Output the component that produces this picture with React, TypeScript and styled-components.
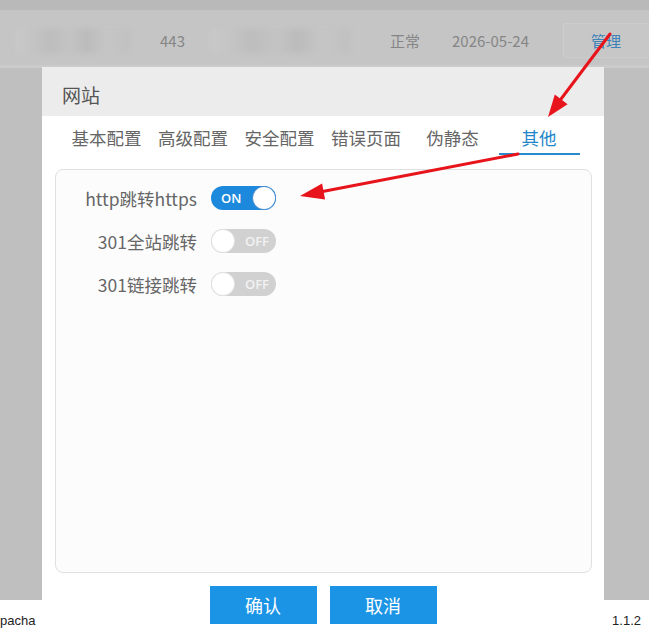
import React from "react";
import styled, { createGlobalStyle } from "styled-components";

const Global = createGlobalStyle`
  html, body { margin: 0; padding: 0; background: #fff; }
  body { font-family: "Noto Sans CJK SC", "Noto Sans", sans-serif; }
  * { box-sizing: border-box; }
`;

const Page = styled.div`
  position: relative;
  width: 649px;
  height: 629px;
  overflow: hidden;
  background: #fff;
`;

const Backdrop = styled.div`
  display: flex;
  flex-direction: column;
  height: 100%;
`;

const TopStrip = styled.div`
  height: 10px;
  background: #b9b9b9;
`;

const TableRow = styled.div`
  height: 58px;
  background: #c5c5c5;
  border-bottom: 3px solid #cbcbcb;
  display: flex;
  align-items: center;
  padding-top: 6px;
  padding-left: 15px;
  color: #858585;
  font-size: 15px;
`;

const Cell = styled.div<{ $w: number }>`
  width: ${(p) => p.$w}px;
  flex: none;
  white-space: nowrap;
`;

const Blob = styled.div<{ $w: number }>`
  width: ${(p) => p.$w}px;
  height: 24px;
  flex: none;
  filter: blur(2.5px);
  background: linear-gradient(
    90deg,
    #c9c9c9 0%,
    #c3c3c3 18%,
    #bdbdbd 30%,
    #c4c4c4 48%,
    #bbbbbb 62%,
    #c6c6c6 80%,
    #c0c0c0 100%
  );
`;

const ManageBtn = styled.div`
  width: 90px;
  height: 35px;
  flex: none;
  border: 1px solid #cdcdcd;
  border-radius: 2px;
  background: #c7c7c7;
  color: #3d82b8;
  font-size: 15px;
  display: flex;
  align-items: center;
  padding-left: 27px;
`;

const Dim = styled.div`
  flex: 1;
  background: #bfbfbf;
`;

const Footer = styled.div`
  height: 29px;
  flex: none;
  background: #fff;
  display: flex;
  justify-content: space-between;
  padding-top: 13px;
  padding-right: 8px;
  font-family: "Liberation Sans", sans-serif;
  font-size: 13px;
  line-height: 15px;
  color: #222;
`;

const Modal = styled.div`
  position: absolute;
  left: 42px;
  top: 67px;
  width: 562px;
  height: 580px;
  background: #fff;
  display: flex;
  flex-direction: column;
`;

const Header = styled.div`
  height: 49px;
  flex: none;
  background: #ececec;
  color: #555;
  font-size: 19px;
  display: flex;
  align-items: center;
  padding-left: 20px;
  padding-top: 5px;
`;

const Tabs = styled.div`
  height: 39px;
  flex: none;
  display: flex;
  gap: 5.5px;
  padding-left: 24px;
`;

const Tab = styled.div<{ $active?: boolean }>`
  width: 81px;
  height: 39px;
  padding-top: 6px;
  display: flex;
  align-items: center;
  justify-content: center;
  font-size: 17.5px;
  color: ${(p) => (p.$active ? "#1f86c9" : "#666")};
  border-bottom: 2px solid ${(p) => (p.$active ? "#2a8acb" : "transparent")};
  white-space: nowrap;
`;

const Body = styled.div`
  padding: 14px 12px 0 13px;
`;

const Panel = styled.div`
  height: 404px;
  border: 1px solid #e0e0e0;
  border-radius: 8px;
  background: #fcfcfc;
  padding-top: 6.5px;
`;

const Row = styled.div`
  height: 43px;
  display: grid;
  grid-template-columns: 141px auto;
  column-gap: 14px;
  align-items: center;
  justify-items: start;
`;

const Label = styled.div`
  justify-self: end;
  font-size: 17.5px;
  color: #666;
  white-space: nowrap;
`;

const Switch = styled.div<{ $on?: boolean }>`
  width: 65px;
  height: 24px;
  border-radius: 12px;
  background: ${(p) => (p.$on ? "#1d89dd" : "#d1d1d1")};
  display: flex;
  align-items: center;
  flex-direction: ${(p) => (p.$on ? "row" : "row-reverse")};
  justify-content: space-between;
  padding: 0 ${(p) => (p.$on ? "1px 0 10px" : "7px 0 1px")};
  font-family: "Open Sans", sans-serif;
  font-weight: 600;
  font-size: 13px;
  color: ${(p) => (p.$on ? "#fff" : "#f2f2f2")};
`;

const Knob = styled.span<{ $on?: boolean }>`
  width: 22px;
  height: 22px;
  border-radius: 50%;
  background: #fff;
  box-shadow: 0 0 0 1px ${(p) => (p.$on ? "#4a8fd0" : "#e2e2e2")};
`;

const Actions = styled.div`
  display: flex;
  justify-content: center;
  gap: 13px;
  margin-top: 13px;
`;

const Button = styled.div`
  width: 107px;
  height: 38px;
  background: #1b94e6;
  color: #fff;
  font-size: 18px;
  display: flex;
  align-items: center;
  justify-content: center;
`;

const ArrowLayer = styled.svg`
  position: absolute;
  left: 0;
  top: 0;
  pointer-events: none;
`;

const tabs = ["基本配置", "高级配置", "安全配置", "错误页面", "伪静态", "其他"];

const settings = [
  { label: "http跳转https", on: true },
  { label: "301全站跳转", on: false },
  { label: "301链接跳转", on: false },
];

export default function App() {
  return (
    <>
      <Global />
      <Page>
        <Backdrop>
          <TopStrip />
          <TableRow>
            <Blob $w={115} />
            <Cell $w={30} />
            <Cell $w={50}>443</Cell>
            <Blob $w={140} />
            <Cell $w={40} />
            <Cell $w={62}>正常</Cell>
            <Cell $w={111}>2026-05-24</Cell>
            <ManageBtn>管理</ManageBtn>
          </TableRow>
          <Dim />
          <Footer>
            <span>pacha</span>
            <span>1.1.2</span>
          </Footer>
        </Backdrop>

        <Modal>
          <Header>网站</Header>
          <Tabs>
            {tabs.map((t) => (
              <Tab key={t} $active={t === "其他"}>
                {t}
              </Tab>
            ))}
          </Tabs>
          <Body>
            <Panel>
              {settings.map((s) => (
                <Row key={s.label}>
                  <Label>{s.label}</Label>
                  <Switch $on={s.on}>
                    <span>{s.on ? "ON" : "OFF"}</span>
                    <Knob $on={s.on} />
                  </Switch>
                </Row>
              ))}
            </Panel>
          </Body>
          <Actions>
            <Button>确认</Button>
            <Button>取消</Button>
          </Actions>
        </Modal>

        <ArrowLayer width="649" height="629" viewBox="0 0 649 629">
          <g fill="#e8141b" stroke="#e8141b" strokeLinecap="round">
            <line x1="610" y1="34" x2="558" y2="103" strokeWidth="3" />
            <polygon points="548,117 567.6,104.2 554.8,94.6" stroke="none" />
            <line x1="518" y1="154" x2="320" y2="192" strokeWidth="3" />
            <polygon points="300,196 325.1,199.4 322.1,183.6" stroke="none" />
          </g>
        </ArrowLayer>
      </Page>
    </>
  );
}
